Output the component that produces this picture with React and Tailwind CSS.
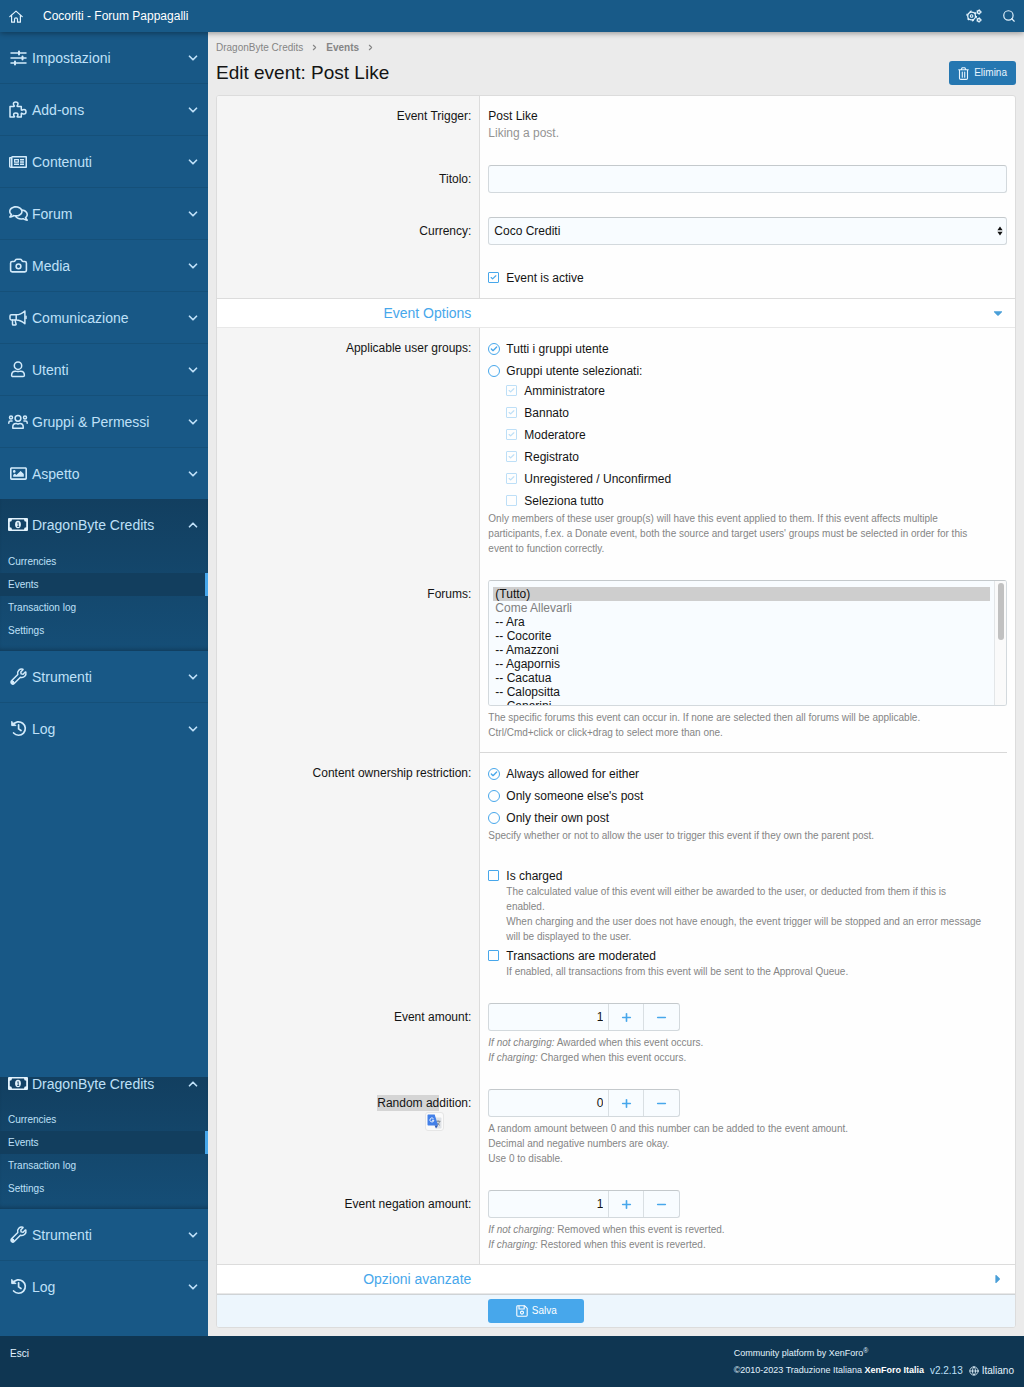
import React from "react";
import { Search, ChevronDown, ChevronUp, ChevronRight, Check, Plus, Minus, Camera, Globe } from "lucide-react";
import {
  FaRegNewspaper,
  FaRegComments,
  FaRegImage,
  FaWrench,
  FaCaretDown,
  FaCaretRight,
} from "react-icons/fa";

function LineIcon({ width, height, weight = 1.5, children }) {
  return (
    <svg
      width={width}
      height={height}
      viewBox={`0 0 ${width} ${height}`}
      fill="none"
      stroke="currentColor"
      strokeWidth={weight}
      strokeLinecap="round"
      strokeLinejoin="round"
      className="shrink-0"
    >
      {children}
    </svg>
  );
}

function HomeIcon() {
  return (
    <LineIcon width={14} height={13} weight={1.2}>
      <path d="M.8 6.600 7 1.100l6.200 5.500" />
      <path d="M2.600 5.400v6.800h2.900V9.300a1.500 1.500 0 0 1 3 0v2.900h2.900V5.400" />
    </LineIcon>
  );
}

function CogsIcon() {
  return (
    <LineIcon width={16} height={14} weight={1.3}>
      <circle cx="5.600" cy="7" r="3.900" />
      <circle cx="5.600" cy="7" r="4.800" strokeDasharray="2 3.030" strokeLinecap="butt" />
      <circle cx="5.600" cy="7" r="1.300" strokeWidth="1.100" />
      <circle cx="12.900" cy="3" r="1.500" />
      <circle cx="12.900" cy="3" r="2.300" strokeDasharray="1.200 1.210" strokeWidth=".8" strokeLinecap="butt" />
      <circle cx="12.900" cy="11" r="1.500" />
      <circle cx="12.900" cy="11" r="2.300" strokeDasharray="1.200 1.210" strokeWidth=".8" strokeLinecap="butt" />
    </LineIcon>
  );
}

function SlidersIcon() {
  return (
    <LineIcon width={17} height={16}>
      <path d="M1 3h15M1 8h15M1 13h15" />
      <path d="M9 1.600v2.800M12.500 6.600v2.800M5 11.600v2.800" strokeWidth="2" />
    </LineIcon>
  );
}

function PuzzleIcon() {
  return (
    <LineIcon width={18} height={17}>
      <path d="M1 5.500h3.800c.5 0 .7-.4.400-.8-.6-.7-.8-1.300-.8-1.900C4.400 1.700 5.300 1 6.700 1S9 1.700 9 2.800c0 .6-.2 1.200-.8 1.900-.3.400-.1.800.4.800h3.700v3.200c0 .5.400.7.800.400.7-.5 1.200-.7 1.900-.7 1.200 0 2 .9 2 2.300s-.8 2.300-2 2.300c-.7 0-1.200-.2-1.900-.7-.4-.3-.8-.1-.8.400V16H8.600c-.5 0-.6-.4-.3-.8.5-.6.7-1 .7-1.500 0-1-.9-1.700-2.200-1.700s-2.200.7-2.200 1.700c0 .5.200.9.700 1.500.3.400.2.800-.3.800H1z" />
    </LineIcon>
  );
}

function BullhornIcon() {
  return (
    <LineIcon width={18} height={16}>
      <path d="M7.200 4.800H2.300c-.8 0-1.300.5-1.300 1.300v2.500c0 .8.500 1.300 1.300 1.300h4.900M7.200 4.800v5.100M7.200 4.800c3.200 0 6.200-1.500 8.700-3.800v12.700c-2.500-2.300-5.500-3.800-8.700-3.800" />
      <path d="M3.500 10v4.200c0 .5.300.8.800.8h2c.7 0 1-.6.700-1.200-.6-1.200-.8-2.400-.7-3.800M17 6.200v2.300" />
    </LineIcon>
  );
}

function UserIcon() {
  return (
    <LineIcon width={18} height={17}>
      <circle cx="9" cy="4.700" r="3.700" />
      <path d="M2.600 14.300c0-2.600 1.500-4.100 3.700-4.100 1 0 1.500.4 2.700.4s1.700-.4 2.700-.4c2.200 0 3.700 1.500 3.700 4.100 0 .8-.5 1.300-1.300 1.300H3.900c-.8 0-1.300-.5-1.300-1.300z" />
    </LineIcon>
  );
}

function UsersIcon() {
  return (
    <LineIcon width={20} height={16}>
      <circle cx="10" cy="4.300" r="2.900" />
      <circle cx="3" cy="3.600" r="1.500" />
      <circle cx="17" cy="3.600" r="1.500" />
      <path d="M4.800 14.300h10.400v-1.400c0-2-1.400-3.300-3.300-3.300-.7 0-1.100.3-1.900.3s-1.200-.3-1.900-.3c-1.900 0-3.300 1.300-3.300 3.300z" />
      <path d="M.8 9.200v-.5C.8 7.600 1.600 7.100 2.500 7.100h1.600M19.200 9.200v-.5c0-1.100-.8-1.600-1.700-1.600h-1.600" />
    </LineIcon>
  );
}

function HistoryIcon() {
  return (
    <LineIcon width={17} height={17} weight={1.7}>
      <path d="M2.900 5A6.700 6.700 0 1 1 3.600 13" />
      <path d="M1.700 1.700v3.900h3.900z" fill="currentColor" strokeWidth="1" />
      <path d="M8.600 4.800v4.100l2.400 1.600" />
    </LineIcon>
  );
}

function MoneyIcon() {
  return (
    <svg width="20" height="13" viewBox="0 0 20 13">
      <rect width="20" height="13" rx="1" fill="currentColor" />
      <path d="M4 1.500h12a2.200 2.200 0 0 0 2.200 2.200v5.600a2.200 2.200 0 0 0-2.200 2.200H4a2.200 2.200 0 0 0-2.200-2.200V3.700A2.200 2.200 0 0 0 4 1.500z" fill="#124266" />
      <ellipse cx="10" cy="6.500" rx="2.900" ry="3.700" fill="currentColor" />
      <path d="M9.300 5.200l.9-.6v3.800M9.200 8.500h2" fill="none" stroke="#124266" strokeWidth=".9" />
    </svg>
  );
}

function TrashIcon() {
  return (
    <LineIcon width={11} height={13} weight={1.1}>
      <path d="M.7 2.700h9.600M3.300 2.500l.8-1.700h2.800l.8 1.700M1.500 2.900v8.300c0 .7.500 1.200 1.200 1.200h5.600c.7 0 1.200-.5 1.200-1.200V2.900M4.300 5v5.200M6.700 5v5.200" />
    </LineIcon>
  );
}

function SaveIcon() {
  return (
    <LineIcon width={12} height={12} weight={1.1}>
      <path d="M1.700.8h7l2.500 2.500v7c0 .5-.4.900-.9.900H1.700c-.5 0-.9-.4-.9-.9V1.700c0-.5.400-.9.900-.9z" />
      <path d="M3 1v3h5.200V1" />
      <circle cx="6" cy="7.600" r="1.500" />
    </LineIcon>
  );
}

function TranslateIcon() {
  return (
    <svg width="15" height="15" viewBox="0 0 15 15">
      <path d="M5 3.500h8.500c.6 0 1 .4 1 1v9c0 .6-.4 1-1 1H9z" fill="#dfe2e6" />
      <path d="M8.800 7.300h4.700M11.100 6.300v1M12.600 7.500c-.4 1.700-1.500 3-2.900 3.800M10 8.600c.6 1.200 1.600 2.100 2.900 2.700" stroke="#70777f" strokeWidth=".8" fill="none" />
      <path d="M1.500.5h6.200l3.300 11H1.500c-.6 0-1-.4-1-1v-9c0-.6.400-1 1-1z" fill="#4380e8" />
      <path d="M7.600 11.500H11l-2 3z" fill="#2a57b5" />
      <path d="M6.500 4.700a2 2 0 1 0 .4 1.600H5" stroke="#fff" strokeWidth=".9" fill="none" />
    </svg>
  );
}

const topNav = [
  ["Impostazioni", <SlidersIcon />],
  ["Add-ons", <PuzzleIcon />],
  ["Contenuti", <FaRegNewspaper size={18} />],
  ["Forum", <FaRegComments size={19} />],
  ["Media", <Camera size={19} strokeWidth={2} />],
  ["Comunicazione", <BullhornIcon />],
  ["Utenti", <UserIcon />],
  ["Gruppi & Permessi", <UsersIcon />],
  ["Aspetto", <FaRegImage size={17} />],
];

const bottomNav = [
  ["Strumenti", <FaWrench size={15} fill="none" stroke="currentColor" strokeWidth={50} strokeLinejoin="round" className="overflow-visible" />],
  ["Log", <HistoryIcon />],
];

function NavRow({ label, icon }) {
  return (
    <li className="border-b border-[#155079] last:border-b-0">
      <button type="button" className="flex h-[51px] w-full items-center px-2 text-left text-sm">
        <span className="flex w-5 justify-center text-[#d3ebfb]">{icon}</span>
        <span className="ml-1 flex-1">{label}</span>
        <ChevronDown size={14} strokeWidth={3} />
      </button>
    </li>
  );
}

function NavList({ items }) {
  return (
    <ul>
      {items.map(([label, icon]) => (
        <NavRow key={label} label={label} icon={icon} />
      ))}
    </ul>
  );
}

function CreditsSection({ clipped }) {
  return (
    <section className="bg-linear-to-b from-[#123f60] to-[#154e77] pb-[9px] shadow-[inset_0_-4px_5px_-3px_rgba(0,0,0,0.3)]">
      <button
        type="button"
        className={
          clipped
            ? "flex h-[31px] w-full items-start px-2 text-left text-sm leading-[14px]"
            : "flex h-[51px] w-full items-center px-2 text-left text-sm"
        }
      >
        <span className="flex w-5 justify-center text-[#e3f3fd]">
          <MoneyIcon />
        </span>
        <span className="ml-1 flex-1">DragonByte Credits</span>
        <ChevronUp size={14} strokeWidth={3} />
      </button>
      <ul className="text-[10px] leading-[23px]">
        {["Currencies", "Events", "Transaction log", "Settings"].map((name) => (
          <li key={name}>
            <a
              href="#"
              className={name === "Events" ? "block border-r-[3px] border-[#47a7eb] bg-[#123e5e] px-2" : "block px-2"}
            >
              {name}
            </a>
          </li>
        ))}
      </ul>
    </section>
  );
}

function Choice({ type = "checkbox", name, label, checked, disabled }) {
  const round = type === "radio";
  return (
    <label className="flex h-[17px] items-center gap-1.5">
      <span className={disabled ? "grid size-3 items-center opacity-35" : "grid size-3 items-center"}>
        <input
          type={type}
          name={name}
          defaultChecked={checked}
          disabled={disabled}
          className={
            round
              ? "peer col-start-1 row-start-1 size-3 appearance-none rounded-full border border-[#47a7eb]"
              : "peer col-start-1 row-start-1 size-[11px] appearance-none rounded-[1px] border border-[#47a7eb]"
          }
        />
        <Check
          strokeWidth={4}
          className={
            round
              ? "pointer-events-none invisible col-start-1 row-start-1 size-2 justify-self-center text-[#47a7eb] peer-checked:visible"
              : "pointer-events-none invisible col-start-1 row-start-1 ml-0.5 size-[7px] text-[#47a7eb] peer-checked:visible"
          }
        />
      </span>
      {label}
    </label>
  );
}

function Row({ label, htmlFor, tall, children }) {
  return (
    <div className="grid grid-cols-[33%_1fr]">
      <div className="border-r border-[#dcdcdc] bg-[#f5f5f5] px-2 py-3 text-right">
        {label && (
          <label htmlFor={htmlFor} className={tall ? "block leading-7" : "block leading-[17px]"}>
            {label}
          </label>
        )}
      </div>
      <div className="min-w-0 px-2 py-3">{children}</div>
    </div>
  );
}

function Explain({ children, className = "mt-1" }) {
  return <p className={`${className} text-[10px] leading-[15px] text-[#858585]`}>{children}</p>;
}

function NumberBox({ id, value }) {
  return (
    <div className="flex h-7 w-48 overflow-hidden rounded-[3px] border border-[#d3d9dd] border-t-[#c4c9cc] bg-[#f8fcff]">
      <input id={id} type="text" inputMode="decimal" defaultValue={value} className="w-0 flex-1 pr-[5px] text-right outline-none" />
      <button type="button" aria-label="Increase" className="flex w-[35px] items-center justify-center border-l border-[#d9dfe3] text-[#47a7eb]">
        <Plus size={13} strokeWidth={3} />
      </button>
      <button type="button" aria-label="Decrease" className="flex w-9 items-center justify-center border-l border-[#d9dfe3] text-[#47a7eb]">
        <Minus size={13} strokeWidth={3} />
      </button>
    </div>
  );
}

function SectionHeader({ title, open }) {
  return (
    <button type="button" aria-expanded={!!open} className="grid h-[30px] w-full grid-cols-[33%_1fr] items-center border-y border-t-[#dcdcdc] border-b-[#e8e8e8] bg-white text-sm text-[#47a7eb]">
      <span className="pr-[9px] text-right">{title}</span>
      <span className="flex justify-end pr-2.5 text-[#4a9fd8]">{open ? <FaCaretDown size={14} /> : <FaCaretRight size={14} />}</span>
    </button>
  );
}

const forums = ["-- Ara", "-- Cocorite", "-- Amazzoni", "-- Agapornis", "-- Cacatua", "-- Calopsitta", "-- Canarini"];

const groups = ["Amministratore", "Bannato", "Moderatore", "Registrato", "Unregistered / Unconfirmed"];

export default function App() {
  return (
    <div className="font-['Liberation_Sans',Arial,sans-serif] text-xs text-[#141414]">
      <header className="relative z-10 flex h-8 items-center bg-[#185a88] px-2 text-[#e3f3fd] shadow-[0_1px_6px_rgba(0,0,0,0.4)]">
        <a href="#" aria-label="Home" className="flex w-4 justify-center">
          <HomeIcon />
        </a>
        <a href="#" className="ml-[19px] flex-1 text-white">
          Cocoriti - Forum Pappagalli
        </a>
        <button type="button" aria-label="Tools">
          <CogsIcon />
        </button>
        <button type="button" aria-label="Search" className="ml-5">
          <Search size={14} strokeWidth={2} />
        </button>
      </header>

      <div className="flex">
        <nav className="flex w-52 shrink-0 flex-col justify-between bg-[#185886] text-[#bfe0f8]">
          <div>
            <NavList items={topNav} />
            <CreditsSection />
            <NavList items={bottomNav} />
          </div>
          <div className="pb-6">
            <CreditsSection clipped />
            <NavList items={bottomNav} />
          </div>
        </nav>

        <main className="min-w-0 flex-1 bg-[#ebebeb] p-2">
          <div className="flex h-[15px] items-center gap-[7px] text-[10px] text-[#858585]">
            <a href="#">DragonByte Credits</a>
            <ChevronRight size={9} strokeWidth={3} />
            <a href="#" className="font-bold">Events</a>
            <ChevronRight size={9} strokeWidth={3} />
          </div>
          <div className="mt-1.5 mb-2.5 flex h-6 items-center justify-between">
            <h1 className="text-[19px]">Edit event: Post Like</h1>
            <button type="button" className="flex h-6 items-center gap-[5px] rounded-[3px] bg-[#2577b1] px-[9px] text-[10px] text-[#e8f5fe]">
              <TrashIcon />
              Elimina
            </button>
          </div>

          <form className="overflow-hidden rounded-[3px] border border-[#dcdcdc] bg-[#fefefe]" onSubmit={(e) => e.preventDefault()}>
            <Row label="Event Trigger:">
              <p className="leading-[17px]">Post Like</p>
              <p className="leading-4 text-[#949494]">Liking a post.</p>
            </Row>
            <Row label="Titolo:" htmlFor="title" tall>
              <input id="title" type="text" className="block h-7 w-full rounded-[3px] border border-[#d3d9dd] border-t-[#c4c9cc] bg-[#f8fcff] px-[5px]" />
            </Row>
            <Row label="Currency:" htmlFor="currency" tall>
              <div className="relative">
                <select id="currency" className="block h-7 w-full appearance-none rounded-[3px] border border-[#d3d9dd] border-t-[#c4c9cc] bg-[#f8fcff] px-[5px]">
                  <option>Coco Crediti</option>
                </select>
                <svg width="6" height="10" viewBox="0 0 6 10" className="pointer-events-none absolute top-[9px] right-1">
                  <path d="M3 .5 5.600 4.300H.4zM3 9.500.4 5.700h5.200z" fill="#111" />
                </svg>
              </div>
            </Row>
            <Row>
              <Choice label="Event is active" checked />
            </Row>

            <SectionHeader title="Event Options" open />

            <Row label="Applicable user groups:">
              <div className="flex flex-col gap-[5px]">
                <Choice type="radio" name="groups" label="Tutti i gruppi utente" checked />
                <Choice type="radio" name="groups" label="Gruppi utente selezionati:" />
                <div className="-mt-0.5 flex flex-col gap-[5px] pl-[18px]">
                  {groups.map((group) => (
                    <Choice key={group} label={group} checked disabled />
                  ))}
                  <Choice label="Seleziona tutto" disabled />
                </div>
              </div>
              <Explain className="mt-0.5">
                Only members of these user group(s) will have this event applied to them. If this event affects multiple
                <br />
                participants, f.ex. a Donate event, both the source and target users' groups must be selected in order for this
                <br />
                event to function correctly.
              </Explain>
            </Row>
            <Row label="Forums:" htmlFor="forums" tall>
              <div className="relative">
                <select
                  id="forums"
                  multiple
                  defaultValue={["(Tutto)"]}
                  className="block h-[126px] w-full rounded-[3px] border border-[#d3d9dd] border-t-[#c4c9cc] bg-[#f8fcff] pt-[6px] pr-4 pb-1 pl-1"
                >
                  <option className="h-[14px] min-h-0 p-0 px-0.5 leading-[14px]">(Tutto)</option>
                  <option disabled className="h-[14px] min-h-0 p-0 px-0.5 leading-[14px] text-[#808080]">Come Allevarli</option>
                  {forums.map((forum) => (
                    <option key={forum} className="h-[14px] min-h-0 p-0 px-0.5 leading-[14px]">{forum}</option>
                  ))}
                </select>
                <div aria-hidden="true" className="pointer-events-none absolute inset-y-px right-px w-3 rounded-r-[2px] border-l border-[#e3e6e8] bg-[#fafafa] pt-0.5 pl-[3px]">
                  <div className="h-[57px] w-1.5 rounded-full bg-[#c1c1c1]" />
                </div>
              </div>
              <Explain>
                The specific forums this event can occur in. If none are selected then all forums will be applicable.
                <br />
                Ctrl/Cmd+click or click+drag to select more than one.
              </Explain>
            </Row>

            <div className="grid grid-cols-[33%_1fr]">
              <div className="border-r border-[#dcdcdc] bg-[#f5f5f5]" />
              <hr className="mr-2 border-[#d8d8d8]" />
            </div>

            <Row label="Content ownership restriction:">
              <div className="flex flex-col gap-[5px]">
                <Choice type="radio" name="owner" label="Always allowed for either" checked />
                <Choice type="radio" name="owner" label="Only someone else's post" />
                <Choice type="radio" name="owner" label="Only their own post" />
              </div>
              <Explain className="mt-0.5">
                Specify whether or not to allow the user to trigger this event if they own the parent post.
              </Explain>
            </Row>
            <Row>
              <Choice label="Is charged" />
              <Explain className="mb-[3px] pl-[18px]">
                The calculated value of this event will either be awarded to the user, or deducted from them if this is
                <br />
                enabled.
                <br />
                When charging and the user does not have enough, the event trigger will be stopped and an error message
                <br />
                will be displayed to the user.
              </Explain>
              <Choice label="Transactions are moderated" />
              <Explain className="pl-[18px]">
                If enabled, all transactions from this event will be sent to the Approval Queue.
              </Explain>
            </Row>
            <Row label="Event amount:" htmlFor="amount" tall>
              <NumberBox id="amount" value="1" />
              <Explain>
                <i>If not charging:</i> Awarded when this event occurs.
                <br />
                <i>If charging:</i> Charged when this event occurs.
              </Explain>
            </Row>
            <Row
              htmlFor="random"
              tall
              label={
                <span className="relative">
                  <span className="bg-[#d5d5d5] py-px">Random ad</span>dition:
                  <span className="absolute top-4 right-[27px] flex size-[19px] items-center justify-center rounded-[3px] border border-[#e6e6e6] bg-[#fafafa]">
                    <TranslateIcon />
                  </span>
                </span>
              }
            >
              <NumberBox id="random" value="0" />
              <Explain>
                A random amount between 0 and this number can be added to the event amount.
                <br />
                Decimal and negative numbers are okay.
                <br />
                Use 0 to disable.
              </Explain>
            </Row>
            <Row label="Event negation amount:" htmlFor="negation" tall>
              <NumberBox id="negation" value="1" />
              <Explain>
                <i>If not charging:</i> Removed when this event is reverted.
                <br />
                <i>If charging:</i> Restored when this event is reverted.
              </Explain>
            </Row>

            <SectionHeader title="Opzioni avanzate" />

            <div className="grid grid-cols-[33%_1fr] border-t border-[#cfd3d6] bg-[#edf6fd] py-1">
              <button type="submit" className="col-start-2 ml-2 flex h-6 w-24 items-center justify-center gap-1 rounded-[3px] bg-[#47a7eb] text-[10px] text-white">
                <SaveIcon />
                Salva
              </button>
            </div>
          </form>
        </main>
      </div>

      <footer className="flex items-start justify-between bg-[#0f3652] px-2.5 pt-[9px] pb-2 text-[10px] text-[#e3f3fd]">
        <a href="#" className="leading-[18px]">Esci</a>
        <div className="flex items-end gap-1.5 leading-[17px]">
          <div className="text-[9px]">
            <p>
              Community platform by XenForo<sup>®</sup>
            </p>
            <p>
              ©2010-2023 Traduzione Italiana <b className="text-white">XenForo Italia</b>
            </p>
          </div>
          <span className="text-[#bfe0f8]">v2.2.13</span>
          <a href="#" className="flex items-center gap-[3px]">
            <Globe size={10} strokeWidth={2} />
            Italiano
          </a>
        </div>
      </footer>
    </div>
  );
}
